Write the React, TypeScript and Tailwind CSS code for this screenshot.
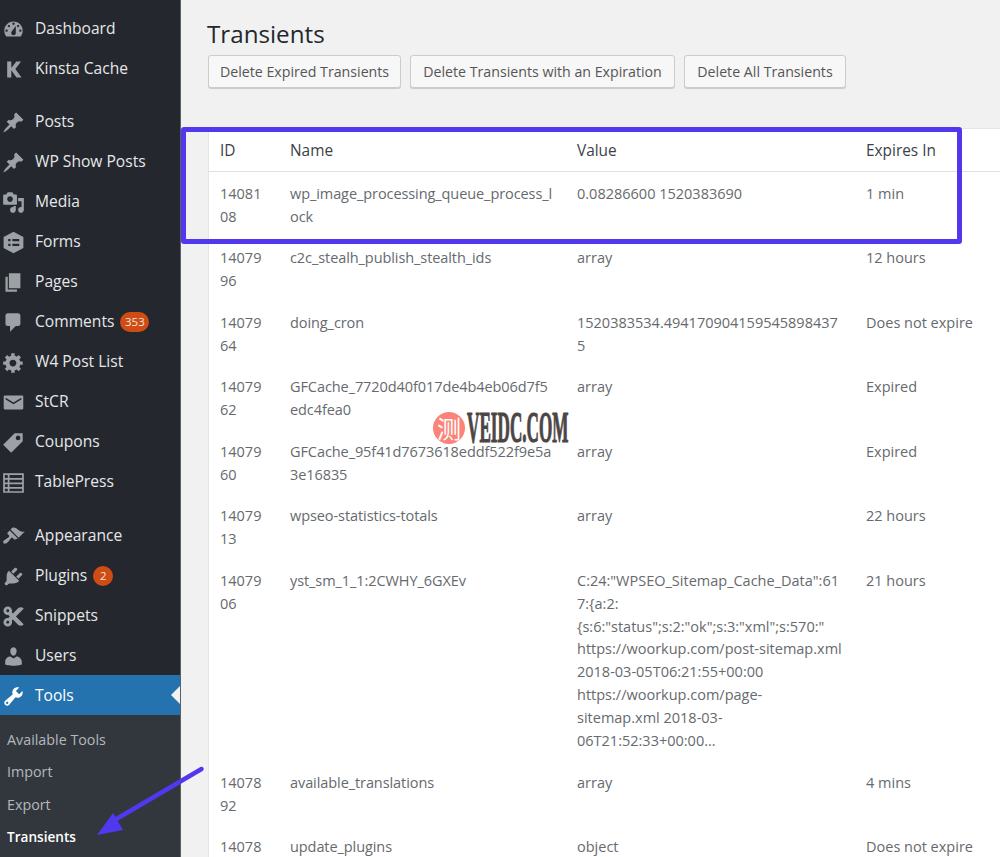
import React from "react";
import { FaCut } from "react-icons/fa";

const D = ({ d, rule }: { d: string; rule?: "evenodd" }) => (
  <svg viewBox="0 0 20 20" className="w-[23px] h-[23px] fill-current">
    <path d={d} fillRule={rule} clipRule={rule} />
  </svg>
);

const pin = "M10.44 3.02l1.82-1.82 6.36 6.35-1.83 1.82c-1.05-.68-2.48-.57-3.41.36l-.75.75c-.92.93-1.04 2.35-.35 3.41l-1.83 1.82-2.41-2.41-2.8 2.79c-.42.42-3.38 2.71-3.8 2.29s1.86-3.39 2.28-3.81l2.79-2.79L4.1 9.36l1.83-1.82c1.05.69 2.48.57 3.4-.36l.75-.75c.93-.92 1.05-2.35.36-3.41z";

const Dashboard = () => <D rule="evenodd" d="M3.76 16h12.48c1.1-1.37 1.76-3.11 1.76-5 0-4.42-3.58-8-8-8s-8 3.58-8 8c0 1.89.66 3.63 1.76 5zM10 4c.55 0 1 .45 1 1s-.45 1-1 1-1-.45-1-1 .45-1 1-1zM6 6c.55 0 1 .45 1 1s-.45 1-1 1-1-.45-1-1 .45-1 1-1zm8 0c.55 0 1 .45 1 1s-.45 1-1 1-1-.45-1-1 .45-1 1-1zm-5.37 5.55L12 7v6c0 1.1-.9 2-2 2s-2-.9-2-2c0-.57.24-1.08.63-1.45zM4 10c.55 0 1 .45 1 1s-.45 1-1 1-1-.45-1-1 .45-1 1-1zm12 0c.55 0 1 .45 1 1s-.45 1-1 1-1-.45-1-1 .45-1 1-1z" />;
const Kinsta = () => <D d="M4.5 3h3.6v5.6L12.4 3h4.2l-5 6.6L17 17h-4.4l-4.5-6.3V17H4.5z" />;
const Pin = () => <D d={pin} />;
const Media = () => <D rule="evenodd" d="M13 11V4c0-.55-.45-1-1-1h-1.67L9 1H5L3.67 3H2c-.55 0-1 .45-1 1v7c0 .55.45 1 1 1h10c.55 0 1-.45 1-1zM7 4.5c1.38 0 2.5 1.12 2.5 2.5S8.38 9.5 7 9.5 4.5 8.38 4.5 7 5.62 4.5 7 4.5zM14 6h5v10.5c0 1.38-1.12 2.5-2.5 2.5S14 17.88 14 16.5s1.12-2.5 2.5-2.5c.17 0 .34.02.5.05V9h-3V6zm-4 8.05V13h2v3.5c0 1.38-1.12 2.5-2.5 2.5S7 17.88 7 16.5 8.12 14 9.5 14c.17 0 .34.02.5.05z" />;
const Forms = () => <D rule="evenodd" d="M10 .6l8.6 4.7v9.4L10 19.4l-8.6-4.7V5.300zM5.400 7v2h2V7zM9 7v2h6V7zM5.400 11v2h2v-2zM9 11v2h6v-2z" />;
const Pages = () => <D d="M6 15V2h10v13H6zm-1 1h8v2H3V5h2v11z" />;
const Comments = () => <D d="M5 2h9c1.100 0 2 .9 2 2v7c0 1.100-.9 2-2 2h-2l-5 5v-5H5c-1.100 0-2-.9-2-2V4c0-1.100.9-2 2-2z" />;
const Gear = () => <D rule="evenodd" d="M18 12h-2.180c-.17.7-.44 1.350-.81 1.930l1.540 1.540-2.100 2.100-1.540-1.540c-.58.36-1.230.63-1.910.79V19H8v-2.180c-.68-.16-1.330-.43-1.910-.79l-1.540 1.540-2.120-2.120 1.540-1.540c-.36-.58-.63-1.230-.79-1.910H1V9.030h2.170c.16-.7.44-1.350.8-1.940L2.430 5.550l2.100-2.100 1.540 1.540c.58-.37 1.240-.64 1.930-.81V2h3v2.180c.68.16 1.330.43 1.910.79l1.540-1.540 2.120 2.120-1.540 1.540c.36.59.64 1.240.8 1.940H18V12zm-8.500 1.500c1.660 0 3-1.340 3-3s-1.340-3-3-3-3 1.340-3 3 1.340 3 3 3z" />;
const Mail = () => <D rule="evenodd" d="M2.500 4h15c.55 0 1 .45 1 1v10c0 .55-.45 1-1 1h-15c-.55 0-1-.45-1-1V5c0-.55.45-1 1-1zm.7 1.800v1.500L10 11.500l6.800-4.200V5.800L10 10z" />;
const Tag = () => <D rule="evenodd" d="M11 2h7v7L8 19l-7-7zm3 6c1.100 0 2-.9 2-2s-.9-2-2-2-2 .9-2 2 .9 2 2 2z" />;
const Table = () => <D rule="evenodd" d="M1 2h18v17H1zm1.500 1.500V6h2.500V3.500zm4 0V6h11V3.500zm-4 4V10h2.500V7.500zm4 0V10h11V7.500zm-4 4V14h2.500v-2.500zm4 0V14h11v-2.500zm-4 4V17.500h2.500v-2zm4 0V17.500h11v-2z" />;
const Brush = () => <D d="M14.480 11.060L7.410 3.990l1.500-1.500c.5-.56 2.300-.47 3.510.32 1.210.8 1.430 1.280 2.910 2.100 1.180.64 2.450 1.260 4.450.85zm-.71.71L6.700 4.700 4.930 6.470c-.39.39-.39 1.020 0 1.410l1.060 1.060c.39.39.39 1.030 0 1.420-.6.6-1.430 1.110-2.210 1.690-.35.26-.7.53-1.010.84C1.430 13.230.4 14.930 1.400 15.930c1 1 2.700-.03 4.040-1.370.31-.31.58-.66.84-1.010.58-.78 1.090-1.610 1.690-2.210.39-.39 1.020-.39 1.410 0l1.060 1.060c.39.39 1.020.39 1.410 0z" />;
const Plug = () => <D d="M13.110 4.360L9.870 7.600 8 5.730l3.240-3.240c.35-.34 1.050-.2 1.560.32.52.51.66 1.210.31 1.550zm-8 1.770l.91-1.120 9.010 9.010-1.190.84c-.71.71-2.630 1.160-3.820 1.160H6.140L4.900 17.260c-.59.59-1.540.59-2.120 0-.59-.58-.59-1.530 0-2.120l1.240-1.240v-3.880c0-1.130.4-3.190 1.090-3.890zm7.260 3.970l3.240-3.240c.34-.35 1.040-.21 1.550.31.52.51.66 1.210.31 1.550l-3.240 3.250z" />;
const Scissors = () => <FaCut className="w-[23px] h-[23px]" />;
const User = () => <D d="M10 9.250c-2.270 0-2.730-3.440-2.730-3.440C7 4.020 7.820 2 9.970 2c2.160 0 2.980 2.020 2.710 3.810 0 0-.41 3.440-2.680 3.440zm0 2.570L12.720 10c2.390 0 4.520 2.330 4.520 4.530v2.490s-3.650 1.130-7.240 1.130c-3.650 0-7.240-1.130-7.240-1.130v-2.490c0-2.250 1.940-4.480 4.470-4.480z" />;
const Wrench = () => <D rule="evenodd" d="M16.680 9.770c-1.340 1.340-3.300 1.670-4.950.99l-5.410 6.520c-.99.99-2.590.99-3.580 0s-.99-2.590 0-3.570l6.520-5.420c-.68-1.650-.35-3.610.99-4.950 1.280-1.280 3.120-1.620 4.720-1.060l-2.890 2.890 2.820 2.820 2.860-2.870c.53 1.580.18 3.390-1.080 4.650zM3.810 16.210c.4.39 1.040.39 1.430 0 .4-.4.4-1.040 0-1.430-.39-.4-1.030-.4-1.430 0-.39.39-.39 1.030 0 1.430z" />;

type Item = { icon: React.ReactNode; label: string; badge?: string };

const groups: Item[][] = [
  [
    { icon: <Dashboard />, label: "Dashboard" },
    { icon: <Kinsta />, label: "Kinsta Cache" },
  ],
  [
    { icon: <Pin />, label: "Posts" },
    { icon: <Pin />, label: "WP Show Posts" },
    { icon: <Media />, label: "Media" },
    { icon: <Forms />, label: "Forms" },
    { icon: <Pages />, label: "Pages" },
    { icon: <Comments />, label: "Comments", badge: "353" },
    { icon: <Gear />, label: "W4 Post List" },
    { icon: <Mail />, label: "StCR" },
    { icon: <Tag />, label: "Coupons" },
    { icon: <Table />, label: "TablePress" },
  ],
  [
    { icon: <Brush />, label: "Appearance" },
    { icon: <Plug />, label: "Plugins", badge: "2" },
    { icon: <Scissors />, label: "Snippets" },
    { icon: <User />, label: "Users" },
  ],
];

const rows: [string, string, string, string][] = [
  ["1408108", "wp_image_processing_queue_process_lock", "0.08286600 1520383690", "1 min"],
  ["1407996", "c2c_stealh_publish_stealth_ids", "array", "12 hours"],
  ["1407964", "doing_cron", "1520383534.4941709041595458984375", "Does not expire"],
  ["1407962", "GFCache_7720d40f017de4b4eb06d7f5edc4fea0", "array", "Expired"],
  ["1407960", "GFCache_95f41d7673618eddf522f9e5a3e16835", "array", "Expired"],
  ["1407913", "wpseo-statistics-totals", "array", "22 hours"],
  [
    "1407906",
    "yst_sm_1_1:2CWHY_6GXEv",
    'C:24:"WPSEO_Sitemap_Cache_Data":617:{a:2:{s:6:"status";s:2:"ok";s:3:"xml";s:570:" https://woorkup.com/post-sitemap.xml 2018-03-05T06:21:55+00:00 https://woorkup.com/page-sitemap.xml 2018-03-06T21:52:33+00:00...',
    "21 hours",
  ],
  ["1407892", "available_translations", "array", "4 mins"],
  ["1407885", "update_plugins", "object", "Does not expire"],
];

const cols = "grid grid-cols-[70px_287px_289px_1fr]";

const buttons: [string, string][] = [
  ["Delete Expired Transients", "w-[193px]"],
  ["Delete Transients with an Expiration", "w-[265px]"],
  ["Delete All Transients", "w-[162px]"],
];

export default function App() {
  return (
    <div className="relative flex h-[857px] w-[1000px] overflow-hidden bg-[#f1f1f1] font-['Open_Sans',sans-serif]">
      <aside className="flex w-[181px] shrink-0 flex-col border-r border-[#5c6064] bg-[#24282e] pt-[9px] text-[15.6px] text-[#e6e7e8]">
        {groups.map((g, i) => (
          <div key={i} className={i === 1 ? "mt-[13px]" : i === 2 ? "mt-[14px]" : ""}>
            {g.map((it) => (
              <div key={it.label} className="flex h-10 items-center">
                <span className="flex w-[35px] justify-start pl-[2px] text-[#9ca1a6]">{it.icon}</span>
                <span>{it.label}</span>
                {it.badge && (
                  <span className={`ml-[6px] flex h-[20px] items-center justify-center rounded-full bg-[#cf4d14] text-[11.5px] text-[#f3e3da] ${it.badge.length > 1 ? "w-[29px]" : "w-[20px]"}`}>
                    {it.badge}
                  </span>
                )}
              </div>
            ))}
          </div>
        ))}
        <div className="relative -mt-px flex h-10 items-center bg-[#2473ae] pt-[2px] text-white">
          <span className="flex w-[35px] pl-[2px]"><Wrench /></span>
          <span>Tools</span>
          <span className="absolute right-0 top-[11px] h-0 w-0 border-y-[9px] border-r-[9px] border-y-transparent border-r-[#f1f1f1]" />
        </div>
        <div className="flex flex-1 flex-col bg-[#32373e] pl-[7px] pt-[8px] text-[14.3px] text-[#b4b8bc]">
          <div className="flex h-[32.5px] items-center">Available Tools</div>
          <div className="flex h-[32.5px] items-center">Import</div>
          <div className="flex h-[32.5px] items-center">Export</div>
          <div className="flex h-[32.5px] items-center text-[13.6px] font-semibold text-white">Transients</div>
        </div>
      </aside>

      <main className="flex min-w-0 flex-1 flex-col">
        <h1 className="ml-[26px] mt-[16px] text-[24.2px] leading-[36px] text-[#23282d]">Transients</h1>
        <div className="ml-[27px] mt-[3px] flex gap-[9px]">
          {buttons.map(([b, w]) => (
            <button key={b} className={`h-[33px] rounded-[3px] border border-[#cccccc] bg-[#f7f7f7] text-[14.2px] text-[#555555] shadow-[0_1px_0_#cccccc] ${w}`}>
              {b}
            </button>
          ))}
        </div>
        <section className="ml-[27px] mt-[40px] flex-1 border-l border-t border-[#e5e5e5] bg-white text-[14.5px] leading-[22.9px] text-[#666a6e]">
          <div className={`${cols} h-[43px] items-center border-b border-[#e1e1e1] pt-[2px] text-[15.4px] text-[#3d4247]`}>
            <div className="pl-[11px] pr-3">ID</div>
            <div className="pl-[11px] pr-3">Name</div>
            <div className="pl-[11px] pr-3">Value</div>
            <div className="pl-[11px] pr-3">Expires In</div>
          </div>
          <div className="pt-[1.4px]">
            {rows.map((r) => (
              <div key={r[0]} className={`${cols} py-[9.35px]`}>
                {r.map((c, i) => (
                  <div key={i} className={`pl-[11px] pr-3 [overflow-wrap:anywhere] ${i === 1 ? "tracking-[-0.08px]" : ""}`}>{c}</div>
                ))}
              </div>
            ))}
          </div>
        </section>
      </main>

      <div className="pointer-events-none absolute left-[181px] top-[127px] h-[117px] w-[781px] rounded-[3px] border-[5px] border-[#5138ee]" />

      <svg className="pointer-events-none absolute left-[90px] top-[760px] h-[85px] w-[120px]" viewBox="90 760 120 85">
        <path d="M201.500 769L113 821" stroke="#5138ee" strokeWidth="4.500" strokeLinecap="round" fill="none" />
        <path d="M97 835L113 813L123 830Z" fill="#5138ee" />
      </svg>

      <div className="pointer-events-none absolute left-[433px] top-[412px] flex h-8 w-8 items-center justify-center rounded-full bg-[#fb8379] font-['Noto_Sans_CJK_SC',sans-serif] text-[24px] leading-none text-white">
        测
      </div>
      <div className="pointer-events-none absolute left-[467px] top-[408px] origin-left scale-x-[0.39] whitespace-nowrap font-['Liberation_Serif',serif] text-[44px] font-bold leading-[40px] text-[#4c4546] [-webkit-text-stroke:1.2px_#4c4546]">
        VEIDC.COM
      </div>
    </div>
  );
}
